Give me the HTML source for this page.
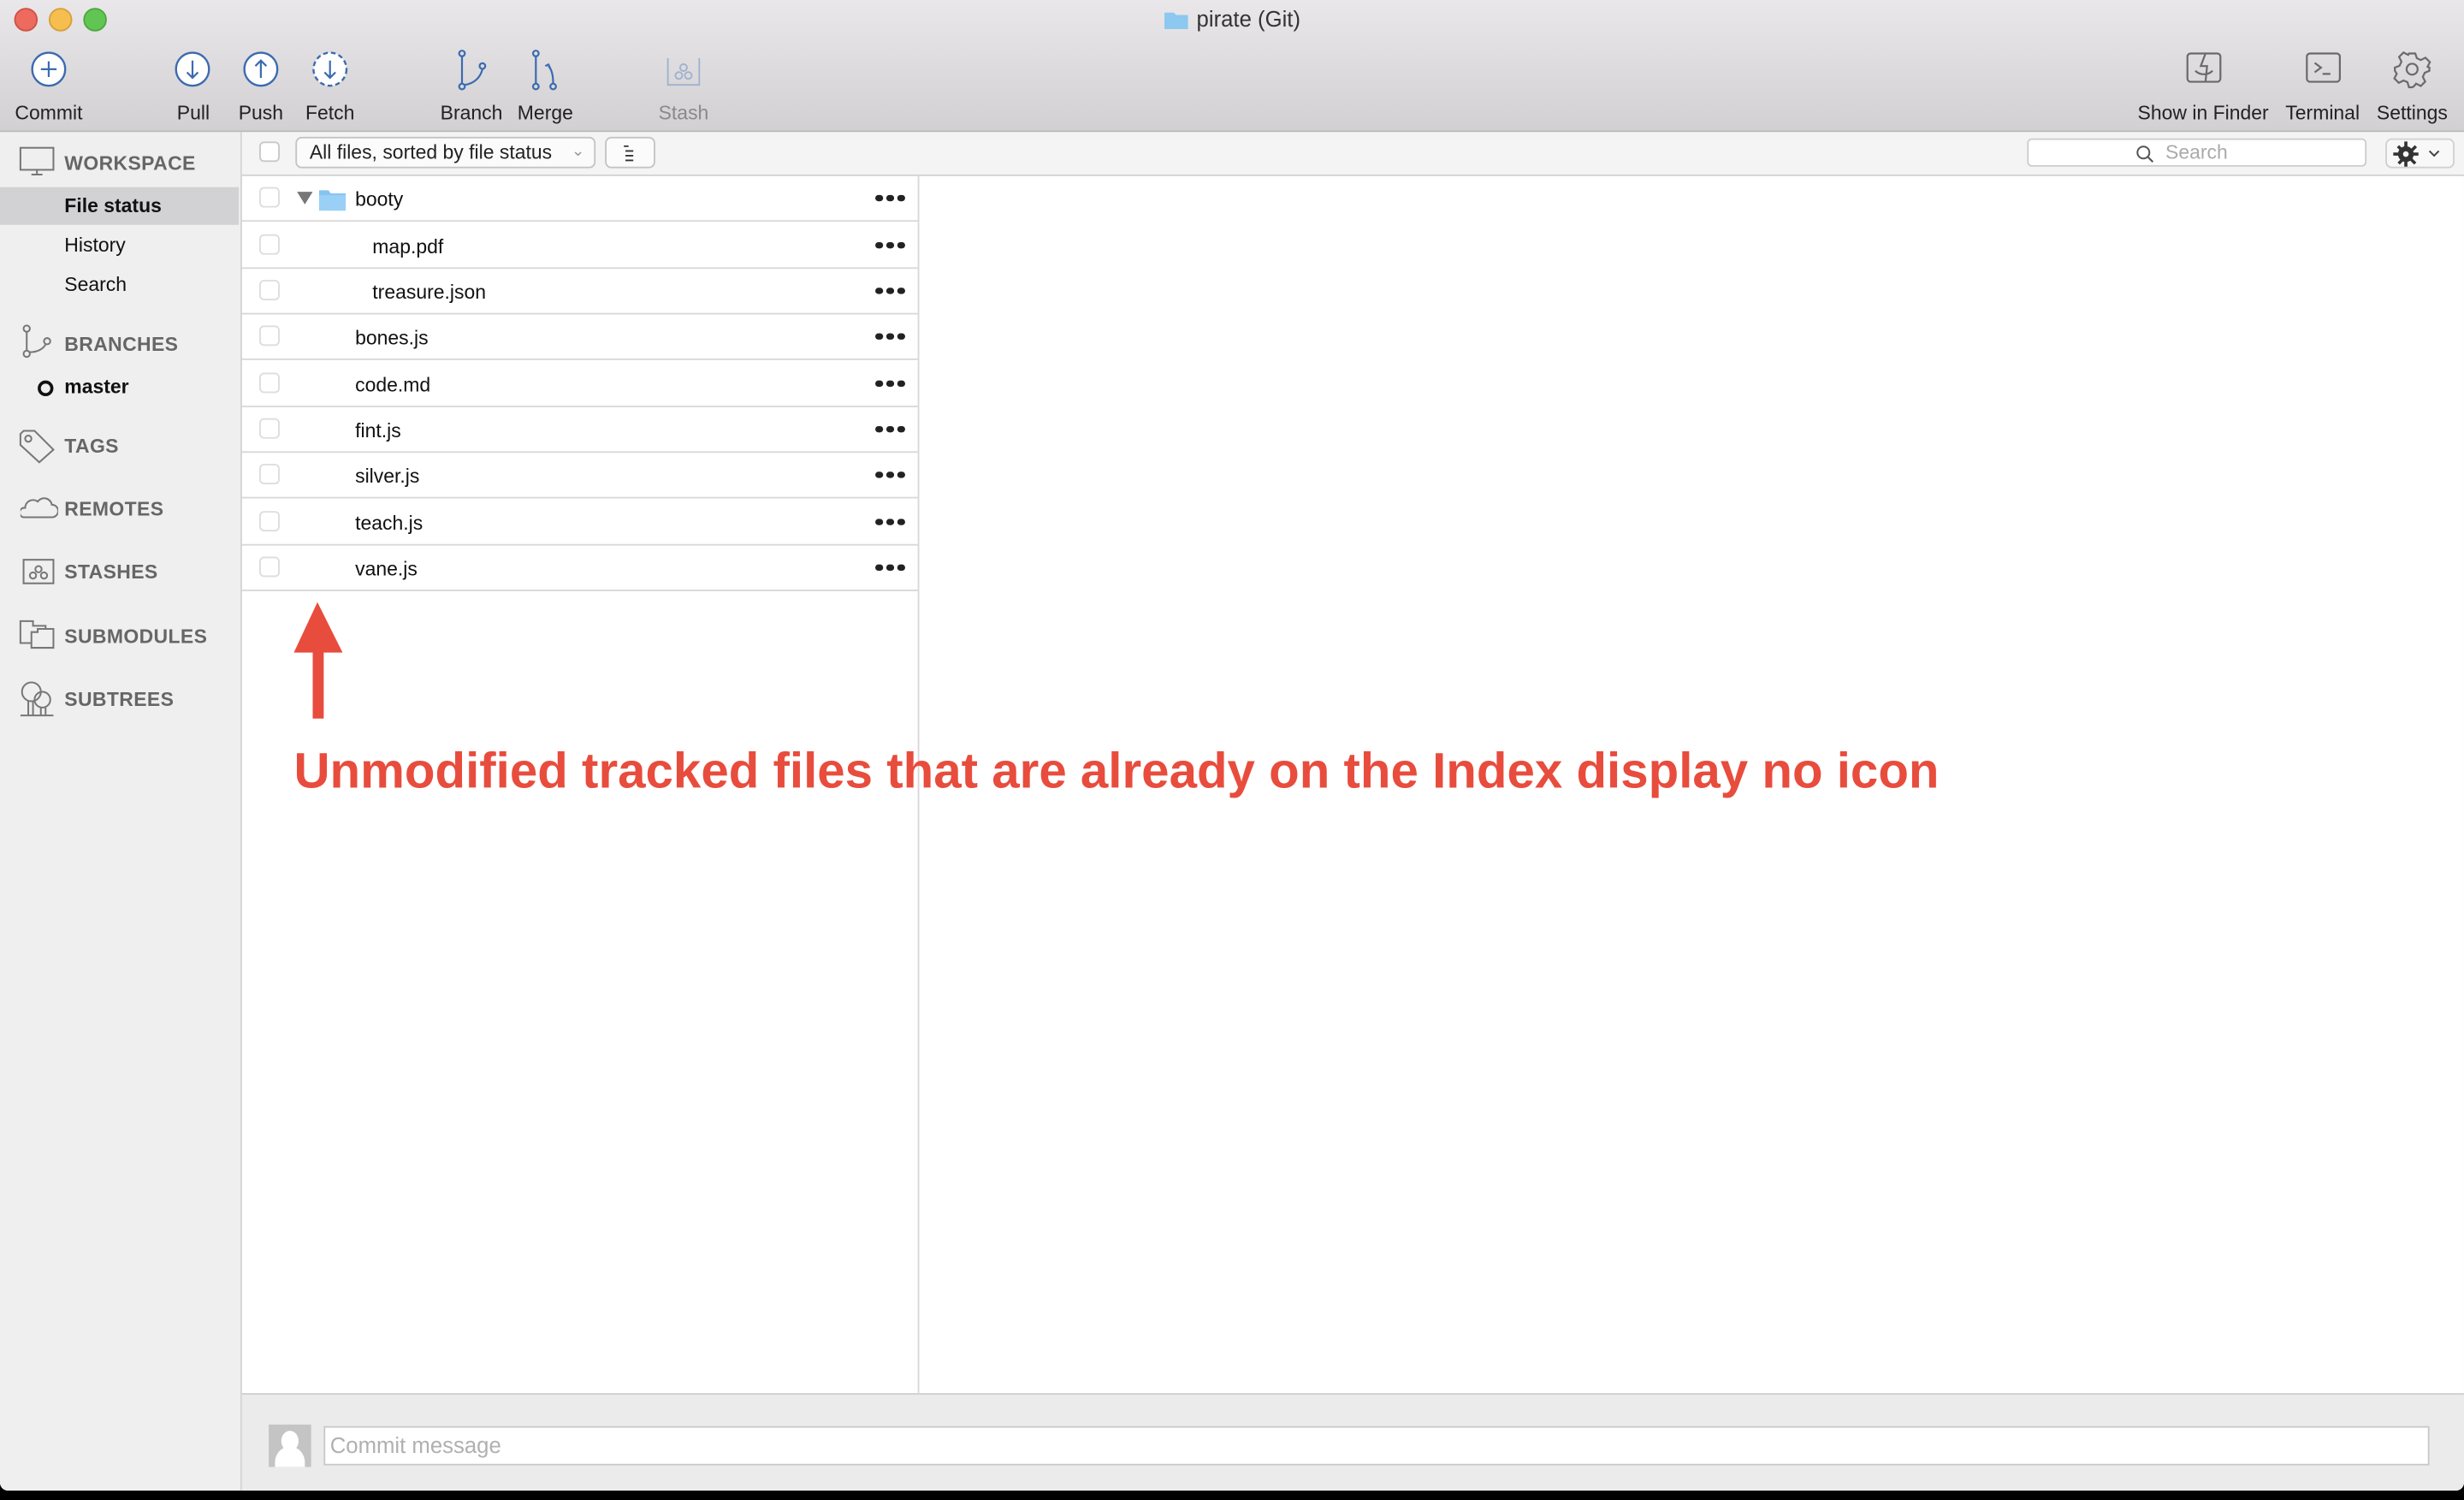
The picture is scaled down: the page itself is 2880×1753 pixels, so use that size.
<!DOCTYPE html>
<html><head><meta charset="utf-8"><style>
html,body{margin:0;padding:0;width:2880px;height:1753px;overflow:hidden;background:#000;}
#s{position:absolute;left:0;top:0;width:1568px;height:954px;transform:scale(1.83673,1.83753);transform-origin:0 0;font-family:"Liberation Sans",sans-serif;color:#222;}
.win{position:absolute;left:0;top:0;width:1568px;height:948px;background:#fff;border-radius:0 0 5px 5px;overflow:hidden;}
.tb{position:absolute;left:0;top:0;width:1568px;height:83px;background:linear-gradient(#e9e7e9,#d2d0d2);border-bottom:1px solid #b9b9b9;}
.dot{position:absolute;top:5px;width:13px;height:13px;border-radius:50%;}
.title{position:absolute;top:4px;left:0;width:1568px;text-align:center;font-size:14px;color:#333;}
.tl{position:absolute;top:65px;font-size:12.5px;color:#222;transform:translateX(-50%);white-space:nowrap;}
.ic{position:absolute;}
.side{position:absolute;left:0;top:84px;width:153px;height:864px;background:#efefef;border-right:1px solid #d4d4d4;}
.sh{position:absolute;left:41px;font-size:12.5px;color:#666;font-weight:bold;letter-spacing:.2px;}
.si{position:absolute;left:41px;font-size:12.5px;color:#111;}
.fb{position:absolute;left:154px;top:84px;width:1414px;height:27px;background:#f4f4f4;border-bottom:1px solid #d4d4d4;}
.cb{position:absolute;width:13px;height:13px;border:1px solid #c8c8c8;border-radius:3px;background:#fff;box-sizing:border-box;}
.row{position:absolute;left:154px;width:430px;height:29px;border-bottom:1px solid #d8d8d8;}
.row .cb{left:11px;top:8px;border-color:#ddd;}
.row .n{position:absolute;top:8.5px;font-size:12.5px;color:#111;}
.dd{position:absolute;top:12.5px;width:4.5px;height:4.5px;border-radius:50%;background:#222;}
.bot{position:absolute;left:154px;top:886px;width:1414px;height:62px;background:#ebebeb;border-top:1px solid #d0d0d0;}
</style></head><body><div id="s">
<div class="win">
<div class="tb">
 <div class="dot" style="left:9px;background:#ed6a5e;border:0.5px solid #d05045"></div>
 <div class="dot" style="left:31px;background:#f5be4f;border:0.5px solid #d6a03a"></div>
 <div class="dot" style="left:53px;background:#61c554;border:0.5px solid #4aa83e"></div>
 <div class="title"><svg width="17" height="13" style="vertical-align:-2px;margin-right:4px"><path d="M1 2h6l1.5 1.5H16v9H1z" fill="#8cc8f0"/></svg>pirate (Git)</div>
 <svg class="ic" style="left:0;top:30px" width="480" height="30">
  <g fill="#fff" stroke="#3b6bb0" stroke-width="1.3">
   <circle cx="31" cy="14" r="10.5"/><circle cx="122.5" cy="14" r="10.5"/><circle cx="166" cy="14" r="10.5"/>
   <circle cx="210" cy="14" r="10.5" stroke-dasharray="3 2"/>
  </g>
  <g fill="none" stroke="#3b6bb0" stroke-width="1.2">
   <path d="M31 9v10M26 14h10"/>
   <path d="M122.5 8.5v11M119 16l3.5 3.5 3.5-3.5"/>
   <path d="M166 19.5v-11M162.5 12l3.5-3.5 3.5 3.5"/>
   <path d="M210 8.5v11M206.5 16l3.5 3.5 3.5-3.5"/>
   <circle cx="294" cy="4" r="1.8"/><circle cx="294" cy="25" r="1.8"/><circle cx="307" cy="12" r="1.8"/>
   <path d="M294 6v17M295.5 24C303 23 306 18 307 14"/>
   <circle cx="341" cy="4" r="1.8"/><circle cx="341" cy="25" r="1.8"/><circle cx="352" cy="25" r="1.8"/>
   <path d="M341 6v17M352 23c0-5-1-9-3-11M347 12l2-1 1 2"/>
  </g>
  <g fill="none" stroke="#9eb2cf" stroke-width="1">
   <path d="M425 7v17h20V7"/><circle cx="432" cy="18" r="2.2"/><circle cx="438" cy="18" r="2.2"/><circle cx="435" cy="13" r="2.2"/>
  </g>
 </svg>
 <div class="tl" style="left:31px">Commit</div>
 <div class="tl" style="left:123px">Pull</div>
 <div class="tl" style="left:166px">Push</div>
 <div class="tl" style="left:210px">Fetch</div>
 <div class="tl" style="left:300px">Branch</div>
 <div class="tl" style="left:347px">Merge</div>
 <div class="tl" style="left:435px;color:#8a8a8a">Stash</div>
 <svg class="ic" style="left:1380px;top:30px" width="180" height="30">
  <g fill="none" stroke="#6a6a6a" stroke-width="1.2">
   <rect x="12" y="4" width="21" height="18" rx="2"/><path d="M23.5 4l-3 8h4l-1 10M17 15c3 3 8 3 11 0"/>
   <rect x="88" y="4" width="21" height="18" rx="2"/><path d="M93 10l4 3-4 3M98 17h5"/>
   <circle cx="155" cy="14" r="3.5"/>
   <path d="M153 4h4l1 3 2.5 1.2 3-1.5 2.8 2.8-1.5 3L166 13v2l-3 1.3-1.2 2.6 1.5 3-2.8 2.8-3-1.5L156 25l-1 .5h-2l-1-3.3-2.5-1-3 1.5-2.8-2.8 1.5-3L144 15v-2l3-1.2 1.2-2.6-1.5-3 2.8-2.8 3 1.5L153 4z"/>
  </g>
 </svg>
 <div class="tl" style="left:1402px">Show in Finder</div>
 <div class="tl" style="left:1478px">Terminal</div>
 <div class="tl" style="left:1535px">Settings</div>
</div>

<div class="side">
 <svg class="ic" style="left:12px;top:9px" width="24" height="20"><g fill="none" stroke="#777" stroke-width="1.1"><rect x="1" y="1" width="21" height="14"/><path d="M8 18h7M11.5 15v3"/></g></svg>
 <div class="sh" style="top:13px">WORKSPACE</div>
 <div style="position:absolute;left:0;top:35px;width:152px;height:24px;background:#d2d2d4"></div>
 <div class="si" style="top:40px;font-weight:bold">File status</div>
 <div class="si" style="top:65px">History</div>
 <div class="si" style="top:90px">Search</div>
 <svg class="ic" style="left:13px;top:122px" width="24" height="24"><g fill="none" stroke="#777" stroke-width="1.1"><circle cx="4" cy="3" r="2"/><circle cx="4" cy="19" r="2"/><circle cx="17" cy="11" r="2"/><path d="M4 5v12M6 18c6 0 9-3 10-5"/></g></svg>
 <div class="sh" style="top:128px">BRANCHES</div>
 <div style="position:absolute;left:24px;top:158px;width:6px;height:6px;border:2px solid #111;border-radius:50%"></div>
 <div class="si" style="top:155px;font-weight:bold">master</div>
 <svg class="ic" style="left:12px;top:189px" width="24" height="24"><g fill="none" stroke="#777" stroke-width="1.1"><path d="M1 3l0 7 12 11 9-8L10 1H3z"/><circle cx="6" cy="6" r="2"/></g></svg>
 <div class="sh" style="top:193px">TAGS</div>
 <svg class="ic" style="left:13px;top:231px" width="24" height="18"><path d="M2 14h18a4 4 0 0 0 0-8 5 5 0 0 0-9-2 5 5 0 0 0-8 4 3 3 0 0 0-1 6z" fill="none" stroke="#777" stroke-width="1.1"/></svg>
 <div class="sh" style="top:233px">REMOTES</div>
 <svg class="ic" style="left:14px;top:271px" width="22" height="18"><g fill="none" stroke="#777" stroke-width="1.1"><rect x="1" y="1" width="19" height="15"/><circle cx="7" cy="11" r="2"/><circle cx="14" cy="11" r="2"/><circle cx="10.5" cy="7" r="2"/></g></svg>
 <div class="sh" style="top:273px">STASHES</div>
 <svg class="ic" style="left:12px;top:310px" width="24" height="20"><g fill="none" stroke="#777" stroke-width="1.1"><path d="M1 1h8v3h8v11H1z"/><path d="M8 8h4v-2h10v12H8z" fill="#efefef"/></g></svg>
 <div class="sh" style="top:314px">SUBMODULES</div>
 <svg class="ic" style="left:12px;top:349px" width="24" height="24"><g fill="none" stroke="#777" stroke-width="1.1"><circle cx="8" cy="7" r="6"/><circle cx="15" cy="12" r="5"/><path d="M6 13v9M9 13v9M14 17v5M17 17v5M1 22h21"/></g></svg>
 <div class="sh" style="top:354px">SUBTREES</div>
</div>

<div class="fb">
 <div class="cb" style="left:11px;top:6px"></div>
 <div style="position:absolute;left:34px;top:3px;border:1px solid #c4c4c4;border-radius:4px;background:#fbfbfb;font-size:12.5px;line-height:18px;padding-left:8px;box-sizing:border-box;width:191px;height:20px">All files, sorted by file status <span style="position:absolute;right:6px;top:0;color:#999;font-size:10px">&#8964;</span></div>
 <div style="position:absolute;left:231px;top:3px;width:32px;height:20px;border:1px solid #c4c4c4;border-radius:4px;background:#fbfbfb;box-sizing:border-box">
  <svg width="30" height="18"><path d="M11 5h3M12 8h5M12 11h5M12 14h5" stroke="#333" stroke-width="1"/></svg></div>
 <div style="position:absolute;left:1136px;top:4px;width:216px;height:18px;border:1px solid #ccc;border-radius:3px;background:#fff;box-sizing:border-box">
  <svg style="position:absolute;left:68px;top:3px" width="12" height="12"><circle cx="5" cy="5" r="3.8" fill="none" stroke="#555" stroke-width="1.1"/><path d="M8 8l3 3" stroke="#555" stroke-width="1.2"/></svg>
  <span style="position:absolute;left:87px;top:1px;font-size:12.5px;color:#aaa">Search</span></div>
 <div style="position:absolute;left:1364px;top:4px;width:44px;height:19px;border:1px solid #d0d0d0;border-radius:4px;background:#f8f8f8;box-sizing:border-box">
  <svg width="44" height="18"><g fill="#333"><circle cx="12" cy="9" r="5"/><path d="M11 1h2v16h-2zM4 8h16v2H4zM6.3 4.7l1.4-1.4 11 11-1.4 1.4zM17.7 3.3l1.4 1.4-11 11-1.4-1.4z"/></g><circle cx="12" cy="9" r="1.8" fill="#f8f8f8"/><path d="M27 7l3 3 3-3" fill="none" stroke="#444" stroke-width="1.1"/></svg></div>
</div>

<div class="row" style="top:111px"><div class="cb"></div>
 <div style="position:absolute;left:35px;top:11px;width:0;height:0;border-left:5px solid transparent;border-right:5px solid transparent;border-top:8px solid #777"></div>
 <svg style="position:absolute;left:49px;top:9px" width="18" height="14"><path d="M0 1h6l1.5 2H17v11H0z" fill="#86c3ef"/><path d="M0 4h17v10H0z" fill="#9ad0f5"/></svg>
 <div class="n" style="left:72px">booty</div><div class="dd" style="left:403px"></div><div class="dd" style="left:410px"></div><div class="dd" style="left:417px"></div></div>
<div class="row" style="top:141px"><div class="cb"></div><div class="n" style="left:83px">map.pdf</div><div class="dd" style="left:403px"></div><div class="dd" style="left:410px"></div><div class="dd" style="left:417px"></div></div>
<div class="row" style="top:170px"><div class="cb"></div><div class="n" style="left:83px">treasure.json</div><div class="dd" style="left:403px"></div><div class="dd" style="left:410px"></div><div class="dd" style="left:417px"></div></div>
<div class="row" style="top:199px"><div class="cb"></div><div class="n" style="left:72px">bones.js</div><div class="dd" style="left:403px"></div><div class="dd" style="left:410px"></div><div class="dd" style="left:417px"></div></div>
<div class="row" style="top:229px"><div class="cb"></div><div class="n" style="left:72px">code.md</div><div class="dd" style="left:403px"></div><div class="dd" style="left:410px"></div><div class="dd" style="left:417px"></div></div>
<div class="row" style="top:258px"><div class="cb"></div><div class="n" style="left:72px">fint.js</div><div class="dd" style="left:403px"></div><div class="dd" style="left:410px"></div><div class="dd" style="left:417px"></div></div>
<div class="row" style="top:287px"><div class="cb"></div><div class="n" style="left:72px">silver.js</div><div class="dd" style="left:403px"></div><div class="dd" style="left:410px"></div><div class="dd" style="left:417px"></div></div>
<div class="row" style="top:317px"><div class="cb"></div><div class="n" style="left:72px">teach.js</div><div class="dd" style="left:403px"></div><div class="dd" style="left:410px"></div><div class="dd" style="left:417px"></div></div>
<div class="row" style="top:346px"><div class="cb"></div><div class="n" style="left:72px">vane.js</div><div class="dd" style="left:403px"></div><div class="dd" style="left:410px"></div><div class="dd" style="left:417px"></div></div>
<div style="position:absolute;left:584px;top:112px;width:1px;height:774px;background:#d8d8d8"></div>

<svg style="position:absolute;left:0;top:0" width="1568" height="954">
 <path d="M202 383L218 415H206V457H199V415H187Z" fill="#e84c3d"/>
 <text x="187" y="501" font-family="Liberation Sans, sans-serif" font-weight="bold" font-size="32" fill="#e84c3d" textLength="1047" lengthAdjust="spacingAndGlyphs">Unmodified tracked files that are already on the Index display no icon</text>
</svg>

<div class="bot">
 <div style="position:absolute;left:17px;top:19px;width:27px;height:27px;background:#c4c4c4;overflow:hidden">
  <div style="position:absolute;left:8px;top:4px;width:11px;height:13px;border-radius:50%;background:#fff"></div>
  <div style="position:absolute;left:4px;top:14px;width:19px;height:20px;border-radius:50% 50% 0 0;background:#fff"></div></div>
 <div style="position:absolute;left:52px;top:20px;width:1340px;height:25px;background:#fff;border:1px solid #c8c8c8;box-sizing:border-box;font-size:14px;color:#b0b0b0;padding:3px 0 0 3px">Commit message</div>
</div>
</div>
</div></body></html>
